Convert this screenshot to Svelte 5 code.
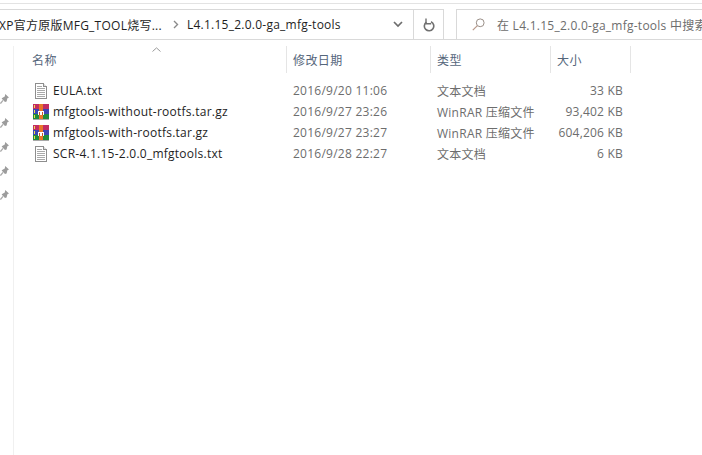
<script>
  const files = [
    { name: 'EULA.txt', date: '2016/9/20 11:06', type: '文本文档', size: '33 KB', icon: 'txt' },
    { name: 'mfgtools-without-rootfs.tar.gz', date: '2016/9/27 23:26', type: 'WinRAR 压缩文件', size: '93,402 KB', icon: 'rar' },
    { name: 'mfgtools-with-rootfs.tar.gz', date: '2016/9/27 23:27', type: 'WinRAR 压缩文件', size: '604,206 KB', icon: 'rar' },
    { name: 'SCR-4.1.15-2.0.0_mfgtools.txt', date: '2016/9/28 22:27', type: '文本文档', size: '6 KB', icon: 'txt' }
  ];
  const pins = [0, 1, 2, 3, 4];
</script>

<div class="window">
  <div class="topline"></div>

  <div class="addressrow">
    <div class="crumbs">
      <span class="crumb first">XP官方原版MFG_TOOL烧写...</span>
      <svg class="sep" width="6" height="9" viewBox="0 0 6 9"><path d="M1 1l3.5 3.5L1 8" fill="none" stroke="#8a8a8a" stroke-width="1.4" /></svg>
      <span class="crumb">L4.1.15_2.0.0-ga_mfg-tools</span>
      <span class="grow"></span>
      <svg class="chev" width="10" height="7" viewBox="0 0 10 7"><path d="M1 1l4 4 4-4" fill="none" stroke="#6d6d6d" stroke-width="1.7" /></svg>
    </div>
    <div class="refresh">
      <svg width="12" height="14" viewBox="0 0 12 14"><path d="M3.4 4.2a4.7 4.7 0 1 0 4.6-.4" fill="none" stroke="#707070" stroke-width="1.6" /><path d="M3 .5v5.2h5.2" fill="none" stroke="#707070" stroke-width="1.4" /></svg>
    </div>
    <div class="search">
      <svg class="lens" width="13" height="13" viewBox="0 0 13 13"><circle cx="8.2" cy="4.8" r="3.9" fill="none" stroke="#9a8f88" /><path d="M5.4 7.6L.8 12.2" stroke="#b8998a" stroke-width="1.2" /></svg>
      <span class="hint">在 L4.1.15_2.0.0-ga_mfg-tools 中搜索</span>
    </div>
  </div>

  <div class="main">
    <div class="pins">
      {#each pins as p}
        <svg width="9" height="10" viewBox="0 0 9 10"><path d="M5.2 0L9 3.4 7.4 4.3 6.6 7.4 5 8 1.6 4.6 3 3.4 4.8 2.6z" fill="#9c9c9c" /><path d="M3 6.4L.4 9.6" stroke="#a8a8a8" stroke-width="1.3" /></svg>
      {/each}
    </div>

    <div class="list">
      <div class="sortarrow">
        <svg width="9" height="5" viewBox="0 0 9 5"><path d="M.5 4.5l4-3.6 4 3.6" fill="none" stroke="#9a9a9a" /></svg>
      </div>
      <div class="header">
        <div class="col c-name">名称</div>
        <div class="col c-date">修改日期</div>
        <div class="col c-type">类型</div>
        <div class="col c-size">大小</div>
      </div>

      <div class="rows">
        {#each files as f}
          <div class="row">
            <div class="cell c-name">
              {#if f.icon === 'txt'}
                <svg class="icon" width="16" height="16" viewBox="0 0 16 16" shape-rendering="crispEdges">
                  <path d="M2.5 .5h8l3 3v12h-11z" fill="#fff" stroke="#8e8e8e" />
                  <path d="M10.5 .5v3h3" fill="#dcdcdc" stroke="#8e8e8e" />
                  <path d="M4 3.5h5M4 5.5h8M4 7.5h8M4 9.5h8M4 11.5h8M4 13.5h8" stroke="#a9a9a9" />
                </svg>
              {:else}
                <svg class="icon" width="16" height="16" viewBox="0 0 16 16" shape-rendering="crispEdges">
                  <rect x="0" y="0" width="16" height="5" fill="#c22d63" />
                  <rect x="0" y="5" width="16" height="5" fill="#3b46b4" />
                  <rect x="0" y="10" width="16" height="5" fill="#1f8c3c" />
                  <rect x="0" y="15" width="16" height="1" fill="#a8a8a8" />
                  <rect x="6" y="0" width="4" height="15" fill="#e8762a" />
                  <rect x="1" y="1" width="1" height="3" fill="#f4e04a" />
                  <rect x="1" y="6" width="1" height="3" fill="#f4e04a" />
                  <rect x="1" y="11" width="1" height="3" fill="#f4e04a" />
                  <rect x="5" y="7" width="6" height="4" fill="#fff" />
                  <rect x="6" y="8" width="1" height="3" fill="#c0562a" />
                  <rect x="9" y="8" width="1" height="3" fill="#c0562a" />
                </svg>
              {/if}
              <span class="fname">{f.name}</span>
            </div>
            <div class="cell c-date dim">{f.date}</div>
            <div class="cell c-type dim">{f.type}</div>
            <div class="cell c-size dim">{f.size}</div>
          </div>
        {/each}
      </div>
    </div>
  </div>
</div>

<style>
  :global(body) {
    margin: 0;
    background: #fff;
    overflow: hidden;
  }

  .window {
    width: 702px;
    height: 455px;
    overflow: hidden;
    font-family: "Open Sans", "Noto Sans CJK SC", sans-serif;
    font-size: 12px;
    letter-spacing: 0.25px;
    color: #1e1e1e;
    display: flex;
    flex-direction: column;
  }

  .topline {
    height: 1px;
    margin-top: 3px;
    background: #e3e3e3;
    flex: none;
  }

  .addressrow {
    display: flex;
    height: 31px;
    margin-top: 5px;
    border-bottom: 1px solid #d9d9d9;
    box-sizing: border-box;
    flex: none;
  }

  .crumbs {
    width: 414px;
    box-sizing: border-box;
    border-top: 1px solid #d9d9d9;
    border-right: 1px solid #d9d9d9;
    display: flex;
    align-items: center;
    white-space: nowrap;
    flex: none;
  }

  .first {
    margin-left: -1px;
  }

  .sep {
    margin: 0 8px 0 11px;
  }

  .grow {
    flex: 1;
  }

  .chev {
    margin-right: 10px;
  }

  .refresh {
    width: 30px;
    box-sizing: border-box;
    border-top: 1px solid #d9d9d9;
    border-right: 1px solid #d9d9d9;
    display: flex;
    align-items: center;
    justify-content: center;
    flex: none;
  }

  .search {
    margin-left: 12px;
    flex: 1;
    min-width: 0;
    border: 1px solid #d9d9d9;
    border-bottom: none;
    border-right: none;
    display: flex;
    align-items: center;
    padding-left: 15px;
    gap: 12px;
    white-space: nowrap;
    overflow: hidden;
    color: #6d6d6d;
  }

  .lens {
    flex: none;
  }

  .main {
    flex: 1;
    display: flex;
    padding-top: 6px;
  }

  .pins {
    width: 14px;
    box-sizing: border-box;
    border-right: 1px solid #f0f0f0;
    padding-top: 48px;
    display: flex;
    flex-direction: column;
    gap: 14px;
    flex: none;
  }

  .list {
    flex: 1;
    position: relative;
  }

  .sortarrow {
    position: absolute;
    left: 138px;
    top: 1px;
    line-height: 0;
  }

  .header {
    display: flex;
    height: 27px;
    align-items: center;
    color: #55667b;
  }

  .col {
    height: 100%;
    display: flex;
    align-items: center;
    box-sizing: border-box;
    border-right: 1px solid #e5e5e5;
    letter-spacing: 0.4px;
  }

  .c-name {
    width: 273px;
    padding-left: 18px;
    box-sizing: border-box;
    flex: none;
  }

  .c-date {
    width: 144px;
    padding-left: 6px;
    box-sizing: border-box;
    flex: none;
  }

  .c-type {
    width: 120px;
    padding-left: 6px;
    box-sizing: border-box;
    flex: none;
  }

  .c-size {
    width: 80px;
    padding-left: 6px;
    box-sizing: border-box;
    flex: none;
  }

  .rows {
    padding-top: 7px;
  }

  .row {
    display: flex;
    height: 21px;
    align-items: center;
    white-space: nowrap;
  }

  .cell {
    display: flex;
    align-items: center;
  }

  .cell.c-name {
    padding-left: 19px;
    gap: 4px;
  }

  .icon {
    flex: none;
  }

  .dim {
    color: #6d6d6d;
  }

  .cell.c-size {
    justify-content: flex-end;
    padding-right: 8px;
    letter-spacing: 0.2px;
  }
</style>
